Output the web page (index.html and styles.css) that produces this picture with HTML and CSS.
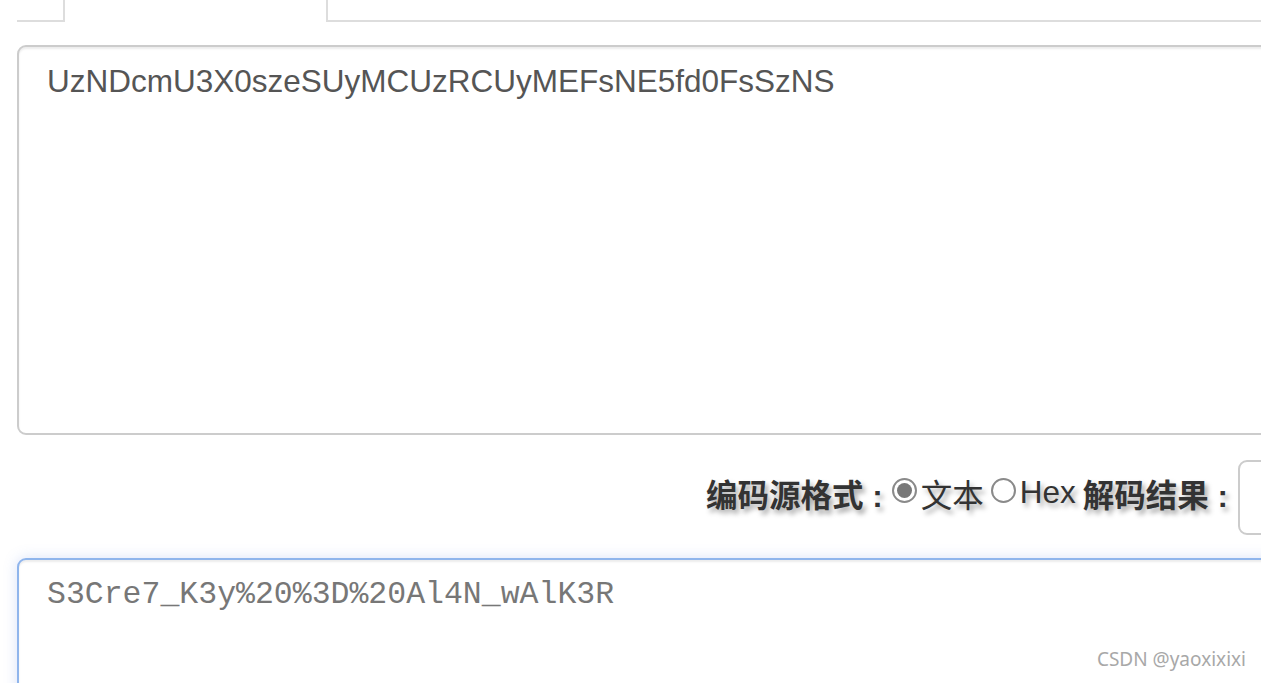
FILE: index.html
```html
<!DOCTYPE html>
<html lang="zh">
<head>
<meta charset="utf-8">
<title>Base64 解码</title>
<link rel="stylesheet" href="styles.css">
</head>
<body>
<div class="page">
  <div class="tabs">
    <div class="tab-gap"></div>
    <div class="tab active"></div>
    <div class="tab-rest"></div>
  </div>
  <textarea class="field src">UzNDcmU3X0szeSUyMCUzRCUyMEFsNE5fd0FsSzNS</textarea>
  <div class="opts">
    <span class="lbl">编码源格式 :</span>
    <span class="radio checked"></span><span class="opt">文本</span>
    <span class="radio"></span><span class="opt">Hex</span>
    <span class="lbl">解码结果 :</span>
    <span class="select"></span>
  </div>
  <textarea class="field out">S3Cre7_K3y%20%3D%20Al4N_wAlK3R</textarea>
</div>
<div class="watermark">CSDN @yaoxixixi</div>
</body>
</html>
```
FILE: styles.css
```css
html, body {
  margin: 0;
  padding: 0;
  background: #fff;
  overflow: hidden;
  height: 683px;
}
.page {
  width: 1360px;
  padding-left: 17px;
  box-sizing: border-box;
  display: flex;
  flex-direction: column;
  font-family: "Liberation Sans", Arial, "Noto Sans CJK SC", sans-serif;
}
.tabs {
  display: flex;
  height: 22px;
}
.tab-gap {
  width: 46px;
  border-bottom: 2px solid #ddd;
}
.tab {
  width: 261px;
  border-left: 2px solid #ddd;
  border-right: 2px solid #ddd;
}
.tab-rest {
  flex: 1;
  border-bottom: 2px solid #ddd;
}
.field {
  display: block;
  width: 100%;
  box-sizing: border-box;
  border: 2px solid #ccc;
  border-radius: 9px;
  padding: 12px 28px;
  resize: none;
  outline: none;
  font-size: 31.5px;
  line-height: 45px;
  box-shadow: inset 0 2px 2px rgba(0,0,0,.075);
  background: #fff;
}
.src {
  margin-top: 23px;
  height: 390px;
  color: #555;
  font-family: "Liberation Sans", Arial, sans-serif;
}
.opts {
  margin-top: 25px;
  display: flex;
  justify-content: flex-end;
  align-items: center;
  height: 75px;
  font-size: 31.5px;
  color: #333;
  text-shadow: 3px 4px 5px #a8a8a8;
}
.lbl {
  font-family: "Liberation Sans", "Noto Sans CJK SC", sans-serif;
  font-weight: bold;
  margin: 0 9px 10px 0;
}
.opt {
  font-family: "Liberation Sans", "Noto Sans CJK SC", sans-serif;
  margin: 0 7px 10px 0;
}
.radio {
  width: 25px;
  height: 25px;
  box-sizing: border-box;
  border: 2px solid #8a8a8a;
  border-radius: 50%;
  margin: 0 4px 15px 0;
  background: #fff;
  display: flex;
  align-items: center;
  justify-content: center;
  text-shadow: none;
}
.radio.checked::after {
  content: "";
  width: 15px;
  height: 15px;
  border-radius: 50%;
  background: #787878;
}
.select {
  width: 122px;
  height: 75px;
  box-sizing: border-box;
  border: 2px solid #ccc;
  border-radius: 9px;
  margin-left: 1px;
  background: #fff;
}
.out {
  margin-top: 23px;
  height: 200px;
  color: #777;
  font-family: "Liberation Mono", "Courier New", monospace;
  border-color: #8fb5ec;
  box-shadow: inset 0 2px 2px rgba(0,0,0,.075), 0 0 14px rgba(102,140,233,.25);
}
.watermark {
  position: absolute;
  right: 15px;
  bottom: 11px;
  font-family: "Noto Sans", "Open Sans", sans-serif;
  font-size: 19px;
  color: #a8a8a8;
}
```
